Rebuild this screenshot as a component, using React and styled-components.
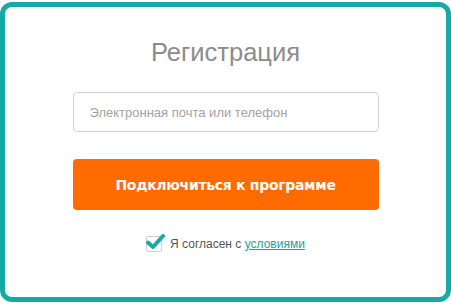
import React, { useState } from "react";
import styled, { createGlobalStyle } from "styled-components";

const GlobalStyle = createGlobalStyle`
  html, body {
    margin: 0;
    padding: 0;
    background: #ffffff;
  }
  body {
    font-family: "Liberation Sans", Arial, sans-serif;
  }
`;

const Frame = styled.div`
  box-sizing: border-box;
  width: 451px;
  height: 300px;
  margin-top: 2px;
  border: 5px solid #17a9a5;
  border-radius: 12px;
  background: #fff;
  display: flex;
  flex-direction: column;
  align-items: center;
  padding-top: 30px;
`;

const Title = styled.h1`
  margin: 0;
  font-weight: normal;
  font-size: 25.5px;
  line-height: 30px;
  color: #8c8c8c;
`;

const Form = styled.div`
  width: 306px;
  margin-top: 25px;
  display: flex;
  flex-direction: column;
`;

const Input = styled.input`
  box-sizing: border-box;
  width: 100%;
  height: 40px;
  border: 1px solid #d2d2d2;
  border-radius: 4px;
  padding: 0 16px;
  font-family: inherit;
  font-size: 13px;
  color: #333;
  outline: none;
  caret-color: #222;
  &::placeholder {
    color: #a3a3a3;
  }
`;

const Button = styled.button`
  margin-top: 27px;
  height: 51px;
  border: none;
  border-radius: 4px;
  background: #ff6b00;
  color: #fff;
  font-family: "DejaVu Sans", Verdana, sans-serif;
  font-weight: bold;
  font-size: 14px;
  letter-spacing: -0.3px;
  cursor: pointer;
`;

const Agree = styled.label`
  margin-top: 26px;
  display: flex;
  align-items: center;
  justify-content: center;
  gap: 8px;
  font-size: 12px;
  color: #555;
  cursor: pointer;
`;

const Box = styled.span`
  position: relative;
  width: 14px;
  height: 14px;
  border: 1px solid #cfcfcf;
  border-radius: 2px;
  background: #fff;
  svg {
    position: absolute;
    left: -1px;
    top: -4px;
  }
`;

const Link = styled.a`
  color: #1f9e9b;
  text-decoration: underline;
`;

export default function App() {
  const [checked, setChecked] = useState(true);
  return (
    <>
      <GlobalStyle />
      <Frame>
        <Title>Регистрация</Title>
        <Form>
          <Input autoFocus placeholder="Электронная почта или телефон" />
          <Button>Подключиться к программе</Button>
          <Agree onClick={() => setChecked(!checked)}>
            <Box>
              {checked && (
                <svg width="19" height="17" viewBox="0 0 19 17">
                  <path
                    d="M2 9.5 L7 14 L17 3"
                    fill="none"
                    stroke="#17a9a5"
                    strokeWidth="4"
                    strokeLinecap="round"
                    strokeLinejoin="round"
                  />
                </svg>
              )}
            </Box>
            <span>
              Я согласен с <Link href="#">условиями</Link>
            </span>
          </Agree>
        </Form>
      </Frame>
    </>
  );
}
